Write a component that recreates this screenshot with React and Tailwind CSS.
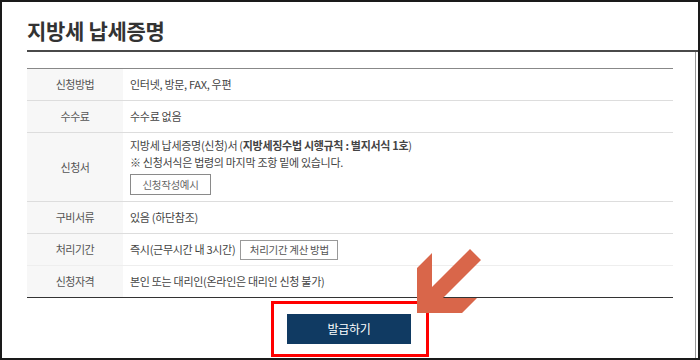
import React from "react";

const font = { fontFamily: '"Noto Sans CJK KR", "Noto Sans", sans-serif' };

function Row({ label, h = "h-[32px]", border = "border-[#dddddd]", children, align = "items-center" }) {
  return (
    <div className={`flex ${h} border-b ${border}`}>
      <div className="w-[96px] shrink-0 bg-[#f7f7f7] flex items-center justify-center text-[11px] text-[#555] tracking-[-0.5px]">
        {label}
      </div>
      <div className={`flex-1 flex ${align} pl-[7px] text-[11px] text-[#444] tracking-[-0.3px]`}>{children}</div>
    </div>
  );
}

export default function App() {
  return (
    <div
      className="relative w-[700px] h-[360px] border-2 border-[#1a1a1a] bg-white flex flex-col overflow-hidden"
      style={font}
    >
      <div className="h-[48px] pl-[25px] pt-[18px]">
        <h1 className="text-[21px] leading-[21px] font-bold text-[#333] tracking-[-0.3px]">지방세 납세증명</h1>
      </div>
      <div className="h-[2px] ml-[25px] bg-[#4a4a4a]" />
      <div className="flex-1 mr-[2px] border-r border-[#999] pl-[25px] pt-[16px]">
        <div className="w-[646px] border-t border-[#888]">
          <Row label="신청방법">인터넷, 방문, FAX, 우편</Row>
          <Row label="수수료">수수료 없음</Row>
          <Row label="신청서" h="h-[69px]" align="items-start">
            <div className="pt-[4px] leading-[17px]">
              <div>
                지방세 납세증명(신청)서 (<span className="font-bold">지방세징수법 시행규칙 : 별지서식 1호</span>)
              </div>
              <div>※ 신청서식은 법령의 마지막 조항 밑에 있습니다.</div>
              <div className="mt-[3px] w-[81px] h-[21px] border border-[#8a8a8a] bg-white flex items-center justify-center text-[10.5px] text-[#666]">
                신청작성예시
              </div>
            </div>
          </Row>
          <Row label="구비서류">있음 (하단참조)</Row>
          <Row label="처리기간" border="border-[#eeeeee]">
            <span>즉시(근무시간 내 3시간)</span>
            <span className="ml-[5px] w-[98px] h-[20px] border border-[#999] bg-white flex items-center justify-center text-[10.5px] text-[#555]">
              처리기간 계산 방법
            </span>
          </Row>
          <Row label="신청자격" border="border-[#333]">본인 또는 대리인(온라인은 대리인 신청 불가)</Row>
        </div>
        <div className="w-[646px] flex justify-center mt-[3px]">
          <div className="w-[158px] h-[56px] border-[3px] border-[#ff0000] flex items-center justify-center pr-[2px]">
            <div className="w-[124px] h-[30px] bg-[#103a62] flex items-center justify-center text-white text-[12px] tracking-[-0.3px]">
              발급하기
            </div>
          </div>
        </div>
      </div>
      <svg
        className="absolute pointer-events-none"
        style={{ left: 413, top: 245 }}
        width="68"
        height="70"
        viewBox="415 247 68 70"
      >
        <polygon
          points="417,313 417,268 432,253 432,287 470,249 481,260 443,298 477,298 462,313"
          fill="#d9664a"
        />
      </svg>
    </div>
  );
}
